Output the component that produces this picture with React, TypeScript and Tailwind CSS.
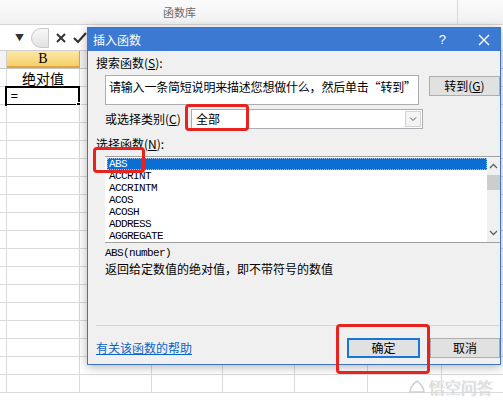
import React from 'react';

const cjk = "font-['Noto_Sans_CJK_SC',sans-serif]";
const mono = "font-['Liberation_Mono',monospace]";

const functions = ['ABS', 'ACCRINT', 'ACCRINTM', 'ACOS', 'ACOSH', 'ADDRESS', 'AGGREGATE'];
const columns = [73, 72, 71, 72, 73, 74, 71, 72];

const SheetRow: React.FC<{ children?: React.ReactNode }> = ({ children }) => (
  <div className="flex h-[18px] border-b border-[#dadada]">
    <div className="w-[7px] shrink-0 border-r border-[#dadada] bg-white" />
    {columns.map((w, i) => (
      <div
        key={i}
        style={{ width: w }}
        className="relative shrink-0 border-r border-[#dadada] bg-white"
      >
        {i === 0 && children}
      </div>
    ))}
  </div>
);

const RedBox: React.FC<{ className: string }> = ({ className }) => (
  <div className={`pointer-events-none absolute rounded-[4px] border-[3px] border-[#e8231d] ${className}`} />
);

export default function App() {
  return (
    <div className={`relative h-[400px] w-[503px] overflow-hidden bg-white text-black ${cjk}`}>
      {/* ribbon */}
      <div className="relative flex h-[25px] border-b border-[#d5d5d5] bg-gradient-to-b from-[#fbfbfb] to-[#f1f1f1]">
        <div className="w-[458px] border-r border-[#d8d8d8] pt-[4px] pl-[163px] text-[11px] leading-[16px] text-[#6a6a6a]">
          函数库
        </div>
      </div>

      {/* formula bar */}
      <div className="flex h-[26px] items-center border-b border-[#d0d0d0] bg-white">
        <span className="ml-[15px] text-[9px] text-[#333]">▼</span>
        <div className="ml-[7px] h-[20px] w-[18px] rounded-l-full border border-[#c8c8c8] bg-gradient-to-b from-[#f8f8f8] to-[#e2e2e2]" />
        <svg width="14" height="14" viewBox="0 0 14 14" className="ml-[5px]">
          <path d="M3 3 L11 11 M11 3 L3 11" stroke="#333" strokeWidth="2" />
        </svg>
        <svg width="16" height="14" viewBox="0 0 16 14" className="ml-[4px]">
          <path d="M2 7 L6 11 L14 2" stroke="#333" strokeWidth="2.2" fill="none" />
        </svg>
      </div>

      {/* column headers */}
      <div className="flex h-[18px] border-b border-[#c6c6c6] bg-[#f3f3f3]">
        <div className="w-[7px] shrink-0 border-r border-[#d0d0d0]" />
        <div className="flex w-[73px] shrink-0 items-center justify-center border-r border-b-2 border-[#d6a948] border-b-[#e2a53c] bg-gradient-to-b from-[#fde8a6] to-[#f6cf69] font-['Liberation_Serif',serif] text-[14px]">
          B
        </div>
        <div className="flex-1 bg-[#f3f3f3]" />
      </div>

      {/* rows */}
      <SheetRow>
        <div className="flex h-full items-center justify-center text-[14px] leading-none">绝对值</div>
      </SheetRow>
      <SheetRow>
        <div className="absolute -left-[2px] -top-[1px] h-[20px] w-[75px] border-2 border-black font-['Liberation_Sans',sans-serif] text-[13px] leading-[15px]">
          &nbsp;=
          <div className="absolute -right-[3px] -bottom-[3px] h-[5px] w-[5px] border border-white bg-black" />
        </div>
      </SheetRow>
      {Array.from({ length: 16 }).map((_, i) => (
        <SheetRow key={i} />
      ))}

      {/* dialog */}
      <div className="absolute left-[87px] top-[27px] flex h-[338px] w-[414px] flex-col border border-[#3f74c4] bg-[#f0f0f0] shadow-[0_2px_10px_rgba(0,0,0,0.3)]">
        <div className="flex h-[23px] shrink-0 items-center bg-[#3b79d3] pl-[5px] pr-[8px] text-[12px] text-white">
          <span>插入函数</span>
          <span className="ml-auto mr-[32px] font-['Liberation_Sans',sans-serif] text-[13px]">?</span>
          <svg width="12" height="12" viewBox="0 0 12 12" className="mr-[2px]">
            <path d="M1 1 L11 11 M11 1 L1 11" stroke="#fff" strokeWidth="1.4" />
          </svg>
        </div>

        <div className="flex flex-1 flex-col pl-[8px] text-[12px] leading-[16px]">
          <div className="mt-[4px]">
            搜索函数(<span className="underline">S</span>):
          </div>
          <div className="mt-[4px] flex items-start">
            <div className="ml-[9px] h-[30px] w-[318px] border border-[#abadb3] bg-white px-[3px] pt-[3px] tracking-[-0.2px]">
              请输入一条简短说明来描述您想做什么，然后单击“转到”
            </div>
            <div className="ml-[10px] mt-[1px] flex h-[20px] w-[72px] items-center justify-center border border-[#adadad] bg-[#e1e1e1]">
              转到(<span className="underline">G</span>)
            </div>
          </div>
          <div className="mt-[4px] flex h-[20px] items-center">
            <span className="ml-[9px] w-[86px]">
              或选择类别(<span className="underline">C</span>)
            </span>
            <div className="flex h-[20px] w-[232px] items-center border border-[#abadb3] bg-white pl-[4px]">
              <span>全部</span>
              <div className="ml-auto mr-[1px] flex h-[16px] w-[16px] items-center justify-center border border-[#d2d2d2] bg-[#f4f4f4]">
                <svg width="8" height="6" viewBox="0 0 8 6">
                  <path d="M1 1.5 L4 4.5 L7 1.5" stroke="#555" fill="none" />
                </svg>
              </div>
            </div>
          </div>
          <div className="mt-[7px]">
            选择函数(<span className="underline">N</span>):
          </div>

          <div className="ml-[9px] mt-[4px] flex h-[87px] border-y border-[#a0a0a0] bg-white">
            <div className={`flex-1 pt-[1px] pl-[2px] text-[11px] leading-[12px] tracking-[-0.6px] ${mono}`}>
              {functions.map((f, i) => (
                <div
                  key={f}
                  className={
                    i === 0
                      ? 'h-[12px] border border-dotted border-[#9cc4ee] bg-[#0a6ed3] pl-[1px] leading-[10px] text-white'
                      : 'h-[12px] pl-[2px]'
                  }
                >
                  {f}
                </div>
              ))}
            </div>
            <div className="flex w-[13px] flex-col items-center bg-[#f0f0f0]">
              <svg width="9" height="6" viewBox="0 0 9 6" className="mt-[6px]">
                <path d="M1 5 L4.5 1.5 L8 5" stroke="#606060" strokeWidth="1.3" fill="none" />
              </svg>
              <div className="mt-[6px] h-[15px] w-full bg-[#cdcdcd]" />
              <svg width="9" height="6" viewBox="0 0 9 6" className="mb-[6px] mt-auto">
                <path d="M1 1 L4.5 4.5 L8 1" stroke="#606060" strokeWidth="1.3" fill="none" />
              </svg>
            </div>
          </div>

          <div className={`ml-[9px] mt-[4px] text-[11px] leading-[12px] tracking-[-0.6px] ${mono}`}>ABS(number)</div>
          <div className="ml-[9px] mt-[2px]">返回给定数值的绝对值，即不带符号的数值</div>

          <div className="mt-[48px] h-px bg-[#d5d5d5]" />
          <div className="mt-[12px] flex items-center">
            <span className="text-[#0a64c8] underline">有关该函数的帮助</span>
            <div className="ml-auto flex h-[20px] w-[73px] items-center justify-center border-2 border-[#1677d6] bg-[#e1e1e1]">
              确定
            </div>
            <div className="ml-[10px] flex h-[20px] w-[70px] items-center justify-center border border-[#adadad] bg-[#e1e1e1]">
              取消
            </div>
          </div>
        </div>
      </div>

      {/* annotations */}
      <RedBox className="left-[185px] top-[104px] h-[27px] w-[64px]" />
      <RedBox className="left-[93px] top-[147px] h-[26px] w-[52px]" />
      <RedBox className="left-[336px] top-[324px] h-[50px] w-[94px]" />

      {/* watermark */}
      <div className="absolute left-[408px] top-[379px] flex items-center gap-[3px] text-[16px] leading-none text-[#e6e6e6] [text-shadow:0_0_1px_#aaa]">
        <svg width="18" height="14" viewBox="0 0 18 14">
          <path d="M2 12 C2 6 7 3 9 1 C11 3 16 6 16 12 Z" fill="none" stroke="#cfcfcf" strokeWidth="1.5" />
        </svg>
        <span>悟空问答</span>
      </div>
    </div>
  );
}
